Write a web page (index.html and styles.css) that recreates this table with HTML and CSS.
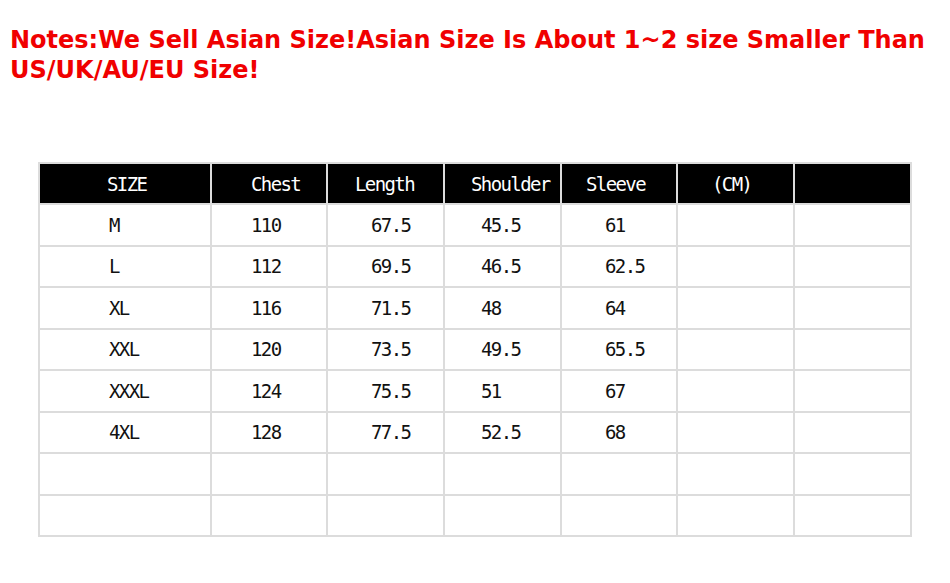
FILE: index.html
```html
<!DOCTYPE html>
<html>
<head>
<meta charset="utf-8">
<link rel="stylesheet" href="styles.css">
</head>
<body>
<h1 class="notes">Notes:We Sell Asian Size!Asian Size Is About 1~2 size Smaller Than US/UK/AU/EU Size!</h1>
<div class="chart">
  <div class="cell head c1">SIZE</div>
  <div class="cell head c2">Chest</div>
  <div class="cell head c3">Length</div>
  <div class="cell head c4">Shoulder</div>
  <div class="cell head c5">Sleeve</div>
  <div class="cell head c6">(CM)</div>
  <div class="cell head"></div>

  <div class="cell b1">M</div><div class="cell b2">110</div><div class="cell b3">67.5</div><div class="cell b4">45.5</div><div class="cell b5">61</div><div class="cell"></div><div class="cell"></div>
  <div class="cell b1">L</div><div class="cell b2">112</div><div class="cell b3">69.5</div><div class="cell b4">46.5</div><div class="cell b5">62.5</div><div class="cell"></div><div class="cell"></div>
  <div class="cell b1">XL</div><div class="cell b2">116</div><div class="cell b3">71.5</div><div class="cell b4">48</div><div class="cell b5">64</div><div class="cell"></div><div class="cell"></div>
  <div class="cell b1">XXL</div><div class="cell b2">120</div><div class="cell b3">73.5</div><div class="cell b4">49.5</div><div class="cell b5">65.5</div><div class="cell"></div><div class="cell"></div>
  <div class="cell b1">XXXL</div><div class="cell b2">124</div><div class="cell b3">75.5</div><div class="cell b4">51</div><div class="cell b5">67</div><div class="cell"></div><div class="cell"></div>
  <div class="cell b1">4XL</div><div class="cell b2">128</div><div class="cell b3">77.5</div><div class="cell b4">52.5</div><div class="cell b5">68</div><div class="cell"></div><div class="cell"></div>
  <div class="cell"></div><div class="cell"></div><div class="cell"></div><div class="cell"></div><div class="cell"></div><div class="cell"></div><div class="cell"></div>
  <div class="cell"></div><div class="cell"></div><div class="cell"></div><div class="cell"></div><div class="cell"></div><div class="cell"></div><div class="cell"></div>
</div>
</body>
</html>
```

FILE: styles.css
```css
html, body {
  margin: 0;
  padding: 0;
  background: #ffffff;
}
body {
  padding: 25px 0 0 10px;
  width: 950px;
  box-sizing: border-box;
}
.notes {
  margin: 0;
  font-family: "DejaVu Sans", sans-serif;
  font-weight: bold;
  font-size: 24px;
  line-height: 30px;
  color: #f00000;
}
.chart {
  margin: 77px 0 0 28px;
  display: grid;
  grid-template-columns: 170px 114px 115px 115px 114px 115px 115px;
  grid-template-rows: 39px;
  grid-auto-rows: 39.5px;
  gap: 2px;
  padding: 2px;
  background: #dcdcdc;
  width: max-content;
  font-family: "DejaVu Sans Mono", monospace;
  font-size: 19px;
  letter-spacing: -1.6px;
  color: #111;
}
.cell {
  background: #fff;
  display: flex;
  align-items: center;
  white-space: nowrap;
}
.head {
  background: #000;
  color: #fff;
}
.head.c1 { padding-left: 67px; }
.head.c2 { padding-left: 39px; }
.head.c3 { padding-left: 27px; }
.head.c4 { padding-left: 26px; }
.head.c5 { padding-left: 24px; }
.head.c6 { padding-left: 34px; }
.b1 { padding-left: 69px; }
.b2 { padding-left: 39px; }
.b3 { padding-left: 43px; }
.b4 { padding-left: 36px; }
.b5 { padding-left: 43px; }
```
